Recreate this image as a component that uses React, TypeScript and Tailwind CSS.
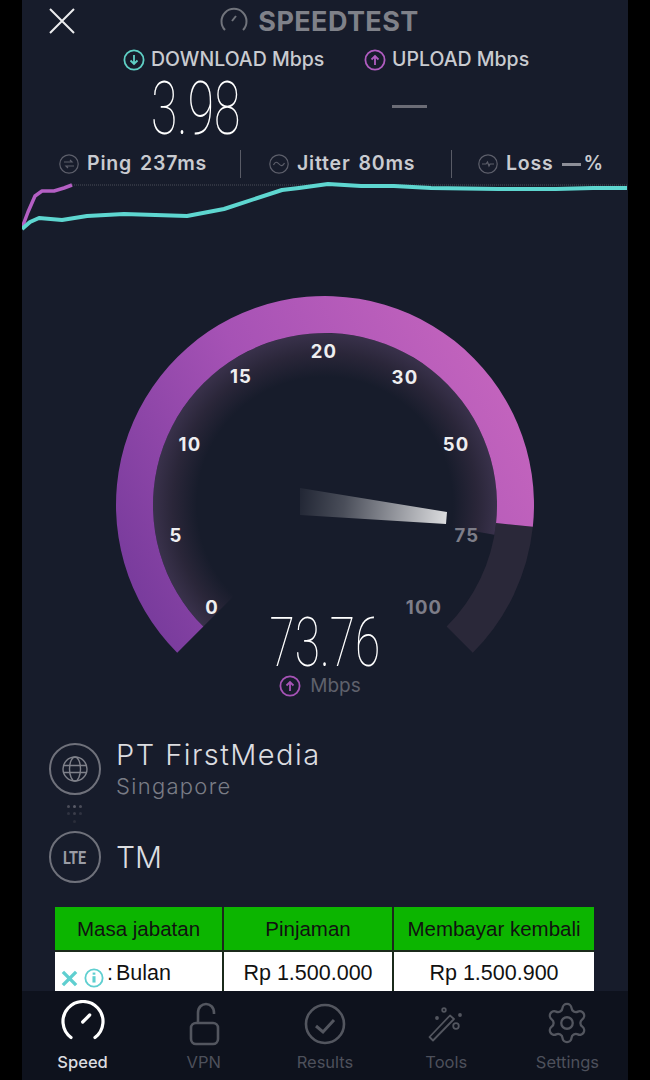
import { Settings } from "lucide-react";

const SANS = "font-['Inter','Noto_Sans',sans-serif]";

const teal = "22,229 30,222 39,218 62,220 87,216 124,214 187,216 224,209 282,190 299,188 328,184 361,186 394,186 431,188 498,189 556,189 593,188 627,188";
const purple = "22,228 28,212 35,196 42,191 54,191 64,188 72,185";

const ticks = [
    { label: "0", x: 212, y: 607, dim: false },
    { label: "5", x: 176, y: 535, dim: false },
    { label: "10", x: 190, y: 444, dim: false },
    { label: "15", x: 241, y: 376, dim: false },
    { label: "20", x: 324, y: 351, dim: false },
    { label: "30", x: 405, y: 377, dim: false },
    { label: "50", x: 456, y: 444, dim: false },
    { label: "75", x: 467, y: 535, dim: true },
    { label: "100", x: 424, y: 607, dim: true },
];

function polar(r: number, deg: number) {
    const a = (deg * Math.PI) / 180;
    return [325 + r * Math.cos(a), 505 + r * Math.sin(a)];
}

// annular sector, angles in degrees clockwise from 3 o'clock
function sector(r1: number, r2: number, from: number, to: number) {
    const [ax, ay] = polar(r2, from);
    const [bx, by] = polar(r2, to);
    const [cx, cy] = polar(r1, to);
    const [dx, dy] = polar(r1, from);
    const large = to - from > 180 ? 1 : 0;
    return `M${ax} ${ay}A${r2} ${r2} 0 ${large} 1 ${bx} ${by}L${cx} ${cy}A${r1} ${r1} 0 ${large} 0 ${dx} ${dy}Z`;
}

function Gauge() {
    return (
        <svg viewBox="22 290 606 380" className="block w-[606px] h-[380px]">
            <defs>
                <linearGradient id="arc" x1="150" y1="650" x2="530" y2="450" gradientUnits="userSpaceOnUse">
                    <stop offset="0" stopColor="#763a9b" />
                    <stop offset="0.5" stopColor="#a652b5" />
                    <stop offset="1" stopColor="#c263bd" />
                </linearGradient>
                <radialGradient id="glow" cx="325" cy="505" r="173" gradientUnits="userSpaceOnUse">
                    <stop offset="0.74" stopColor="#171c2b" />
                    <stop offset="0.88" stopColor="#2a2639" />
                    <stop offset="1" stopColor="#3a324c" />
                </radialGradient>
                <linearGradient id="needle" x1="300" y1="500" x2="447" y2="518" gradientUnits="userSpaceOnUse">
                    <stop offset="0" stopColor="#ffffff" stopOpacity="0.05" />
                    <stop offset="0.3" stopColor="#ffffff" stopOpacity="0.22" />
                    <stop offset="1" stopColor="#ffffff" stopOpacity="0.85" />
                </linearGradient>
            </defs>
            <path d={sector(172, 209, 6, 45)} fill="#2a2839" />
            <path d={sector(120, 172, 135, 370)} fill="url(#glow)" />
            <path d={sector(172, 209, 135, 366)} fill="url(#arc)" />
            <path d="M300 488L447 512L446 524L300 515Z" fill="url(#needle)" />
            {ticks.map((t) => (
                <text
                    key={t.label}
                    x={t.x}
                    y={t.y + 6.5}
                    textAnchor="middle"
                    fontSize="18.5"
                    fontWeight="700"
                    letterSpacing="1.2"
                    fontFamily="Inter, sans-serif"
                    fill={t.dim ? "#7d7d88" : "#eeeef0"}
                >
                    {t.label}
                </text>
            ))}
        </svg>
    );
}

function RingIcon({ color, up }: { color: string; up: boolean }) {
    return (
        <svg viewBox="0 0 22 22" fill="none" stroke={color} className="w-[22px] h-[22px] shrink-0">
            <circle cx="11" cy="11" r="9.6" strokeWidth="1.8" />
            {up ? (
                <path d="M11 16V7M7.5 10.5L11 7l3.5 3.5" strokeWidth="1.8" />
            ) : (
                <path d="M11 6v9M7.5 11.5L11 15l3.5-3.5" strokeWidth="1.8" />
            )}
        </svg>
    );
}

function MiniIcon({ kind }: { kind: "ping" | "jitter" | "loss" }) {
    return (
        <svg viewBox="0 0 20 20" fill="none" stroke="#5d5f6b" strokeWidth="1.2" className="w-5 h-5 shrink-0">
            <circle cx="10" cy="10" r="9.2" />
            {kind === "ping" && <path d="M5 8h8l-2-2M15 12H7l2 2" />}
            {kind === "jitter" && <path d="M4.5 11c1.5-3.5 3.5-3.5 5.5-1s4 2 5.5-1" />}
            {kind === "loss" && <path d="M4 10h4l1.5-2 1.5 4 1-2h4" />}
        </svg>
    );
}

function Stat({ kind, label, value }: { kind: "ping" | "jitter" | "loss"; label: string; value: React.ReactNode }) {
    return (
        <div className="flex items-center gap-[8px] text-[19.5px] font-semibold text-[#c9cbd0] tracking-[0.8px]">
            <MiniIcon kind={kind} />
            <span>{label}</span>
            {value}
        </div>
    );
}

function TabIcon({ name }: { name: string }) {
    const c = "#53565f";
    if (name === "Speed") {
        return (
            <svg viewBox="0 0 44 46" fill="none" stroke="#ffffff" strokeWidth="3.2" strokeLinecap="round" className="w-[44px] h-[46px]">
                <path d="M10 37.5A20 20 0 1 1 34 37.5" />
                <path d="M21.7 22l7-7" />
            </svg>
        );
    }
    if (name === "VPN") {
        return (
            <svg viewBox="0 0 44 46" fill="none" stroke={c} strokeWidth="2.6" className="w-[44px] h-[46px]">
                <rect x="9" y="23" width="27" height="21" rx="5" />
                <path d="M16 23v-10c0-12 16-12 16 0v1" />
            </svg>
        );
    }
    if (name === "Results") {
        return (
            <svg viewBox="0 0 44 46" fill="none" stroke={c} strokeWidth="2.6" className="w-[44px] h-[46px]">
                <circle cx="22" cy="24" r="19" />
                <path d="M13 26l7 6 11-12" strokeWidth="3" />
            </svg>
        );
    }
    if (name === "Tools") {
        return (
            <svg viewBox="0 0 44 46" fill="none" stroke={c} strokeWidth="1.8" className="w-[44px] h-[46px]">
                <path d="M5.5 37L26 15.5L30 19L9 40.5Z" strokeLinejoin="round" />
                <circle cx="20" cy="10" r="1.8" />
                <circle cx="32" cy="26" r="2.8" />
                <circle cx="36" cy="15" r="1" fill={c} />
                <circle cx="13" cy="18" r="1" fill={c} />
            </svg>
        );
    }
    return <Settings size={46} strokeWidth={1.2} color={c} />;
}

export default function App() {
    return (
        <div className={`w-[650px] h-[1080px] bg-black px-[22px] overflow-hidden ${SANS}`}>
            <div className="relative w-[606px] h-[1080px] bg-[#171c2b] flex flex-col">
                {/* header */}
                <div className="relative h-[44px] flex items-center justify-center pr-[11px] shrink-0">
                    <svg viewBox="0 0 26 26" fill="none" stroke="#ececee" strokeWidth="2" className="absolute left-[27px] top-[8px] w-[26px] h-[26px]">
                        <path d="M1 1l24 24M25 1L1 25" />
                    </svg>
                    <svg viewBox="0 0 28 28" fill="none" stroke="#71747c" strokeWidth="2" className="w-[28px] h-[28px] mr-[10px] mb-[4px]">
                        <path d="M5 24A12.5 12.5 0 1 1 23 24" />
                        <path d="M12 15l4-5" />
                    </svg>
                    <span className="text-[27px] font-bold tracking-[0.4px] text-[#7f8189]">SPEEDTEST</span>
                </div>

                {/* download / upload */}
                <div className="flex h-[32px] items-center pl-[101px] shrink-0">
                    <div className="flex items-center gap-[6px] w-[241px] text-[19.5px] font-medium text-[#c9cbd0]">
                        <RingIcon color="#5fd0c5" up={false} />
                        <span>DOWNLOAD Mbps</span>
                    </div>
                    <div className="flex items-center gap-[6px] text-[19.5px] font-medium text-[#c9cbd0]">
                        <RingIcon color="#b05cc0" up />
                        <span>UPLOAD Mbps</span>
                    </div>
                </div>

                <div className="flex h-[68px] items-center pl-[129px] pb-[2px] shrink-0">
                    <span className="w-[241px] origin-left scale-x-[0.65] font-['Roboto',sans-serif] font-[150] text-[74px] leading-none text-white">3.98</span>
                    <span className="h-[3px] w-[35px] mb-[6px] bg-[#6b6c76]" />
                </div>

                {/* ping row */}
                <div className="flex h-[38px] items-center pl-[37px] pt-[2px] shrink-0">
                    <div className="w-[181px]"><Stat kind="ping" label="Ping" value={<span>237ms</span>} /></div>
                    <div className="w-px h-[28px] bg-[#595b66]" />
                    <div className="w-[210px] pl-[28px]"><Stat kind="jitter" label="Jitter" value={<span>80ms</span>} /></div>
                    <div className="w-px h-[28px] bg-[#595b66]" />
                    <div className="pl-[26px]">
                        <Stat
                            kind="loss"
                            label="Loss"
                            value={
                                <span className="flex items-center gap-[3px]">
                                    <i className="w-[19px] h-[3px] bg-[#8d8f98]" />
                                    %
                                </span>
                            }
                        />
                    </div>
                </div>

                {/* graph */}
                <svg viewBox="22 182 606 54" fill="none" className="block w-[606px] h-[54px] shrink-0">
                    <path d="M72 185H628" stroke="#4a4c58" strokeWidth="1" strokeDasharray="1 1" />
                    <polyline points={purple} stroke="#b45fc4" strokeWidth="3.5" strokeLinejoin="round" />
                    <polyline points={teal} stroke="#5ed6d0" strokeWidth="4" strokeLinejoin="round" />
                </svg>

                {/* gauge */}
                <div className="relative mt-[54px] h-[380px] shrink-0">
                    <Gauge />
                    <div className="absolute left-0 right-0 top-[322px] flex flex-col items-center">
                        <span className="scale-x-[0.668] font-['Roboto',sans-serif] font-[150] text-[69px] leading-[62px] text-white">73.76</span>
                        <div className="flex items-center gap-[9px] pr-[10px] text-[19px] leading-[24px] text-[#5f616c]">
                            <RingIcon color="#a653b6" up />
                            <span>Mbps</span>
                        </div>
                    </div>
                </div>

                {/* provider */}
                <div className="mt-[68px] flex items-center pl-[27px] shrink-0">
                    <div className="flex items-center justify-center w-[52px] h-[52px] rounded-full border-2 border-[#6f717b] mr-[15px]">
                        <svg viewBox="0 0 26 26" fill="none" stroke="#7f818a" strokeWidth="1.4" className="w-[26px] h-[26px]">
                            <circle cx="13" cy="13" r="12" />
                            <ellipse cx="13" cy="13" rx="5.5" ry="12" />
                            <path d="M1.5 9.5h23M1.5 16.5h23" />
                        </svg>
                    </div>
                    <div className="flex flex-col">
                        <span className="text-[29px] font-light tracking-[1.45px] leading-[34px] text-[#dcdde0]">PT FirstMedia</span>
                        <span className="text-[22px] font-light tracking-[1.3px] leading-[28px] text-[#7a7c86]">Singapore</span>
                    </div>
                </div>
                <div className="ml-[45px] mt-[5px] grid grid-cols-3 gap-x-[3px] gap-y-[4px] w-[15px] h-[18px] shrink-0">
                    <i className="w-[3px] h-[3px] bg-[#4a4c58] rounded-full" />
                    <i className="w-[3px] h-[3px] bg-[#5a5c68] rounded-full" />
                    <i className="w-[3px] h-[3px] bg-[#4a4c58] rounded-full" />
                    <i className="w-[3px] h-[3px] bg-[#2f3240] rounded-full" />
                    <i className="w-[3px] h-[3px] bg-[#3b3d4a] rounded-full" />
                    <i className="w-[3px] h-[3px] bg-[#2f3240] rounded-full" />
                    <i className="col-start-2 w-[3px] h-[3px] bg-[#2a2d3a] rounded-full" />
                </div>
                <div className="mt-[8px] flex items-center pl-[27px] shrink-0">
                    <div className="flex items-center justify-center w-[52px] h-[52px] rounded-full border-2 border-[#6f717b] mr-[15px]">
                        <span className="scale-x-[0.8] font-['Roboto',sans-serif] text-[18px] font-bold text-[#9a9ca5]">LTE</span>
                    </div>
                    <span className="text-[30px] font-light text-[#dcdde0]">TM</span>
                </div>

                {/* ad table */}
                <div className="relative mt-[24px] ml-[33px] w-[539px] h-[84px] grid grid-cols-[167px_170px_202px] font-['Liberation_Sans',sans-serif] text-[#111] shrink-0">
                    <div className="h-[43px] pt-[2px] text-[20.5px] bg-[#0cb500] flex items-center justify-center">Masa jabatan</div>
                    <div className="h-[43px] pt-[2px] text-[20.5px] bg-[#0cb500] border-l-2 border-[#1b2a1b] flex items-center justify-center">Pinjaman</div>
                    <div className="h-[43px] pt-[2px] text-[20.5px] bg-[#0cb500] border-l-2 border-[#1b2a1b] flex items-center justify-center">Membayar kembali</div>
                    <div className="h-[41px] pt-[4px] gap-[3px] text-[21.5px] bg-white border-t-2 border-[#1b2a1b] flex items-center pl-[52px]"><span>:</span><span>Bulan</span></div>
                    <div className="h-[41px] pt-[4px] text-[21.5px] bg-white border-t-2 border-l-2 border-[#1b2a1b] flex items-center justify-center">Rp 1.500.000</div>
                    <div className="h-[41px] pt-[4px] text-[21.5px] bg-white border-t-2 border-l-2 border-[#1b2a1b] flex items-center justify-center">Rp 1.500.900</div>
                    <div className="absolute left-[6px] top-[61px] flex items-center gap-[6px]">
                        <svg viewBox="0 0 18 18" fill="none" stroke="#5fcfd0" strokeWidth="3.6" className="w-[17px] h-[17px]">
                            <path d="M2 2l14 14M16 2L2 16" />
                        </svg>
                        <svg viewBox="0 0 22 22" fill="none" stroke="#5fcfd0" strokeWidth="2" className="w-[20px] h-[20px]">
                            <circle cx="11" cy="11" r="9.5" />
                            <path d="M11 9v7" strokeWidth="3.4" />
                            <path d="M11 5v2.4" strokeWidth="3" />
                        </svg>
                    </div>
                </div>

                {/* tab bar */}
                <div className="flex-1 bg-[#0e121d] grid grid-cols-5">
                    {["Speed", "VPN", "Results", "Tools", "Settings"].map((name) => (
                        <div key={name} className="flex flex-col items-center pt-[9px]">
                            <div className="h-[46px] flex items-center justify-center"><TabIcon name={name} /></div>
                            <span className={`mt-[6px] text-[16.5px] leading-[20px] ${name === "Speed" ? "font-medium text-[#dcdde0]" : "text-[#4d505b]"}`}>{name}</span>
                        </div>
                    ))}
                </div>
            </div>
        </div>
    );
}
